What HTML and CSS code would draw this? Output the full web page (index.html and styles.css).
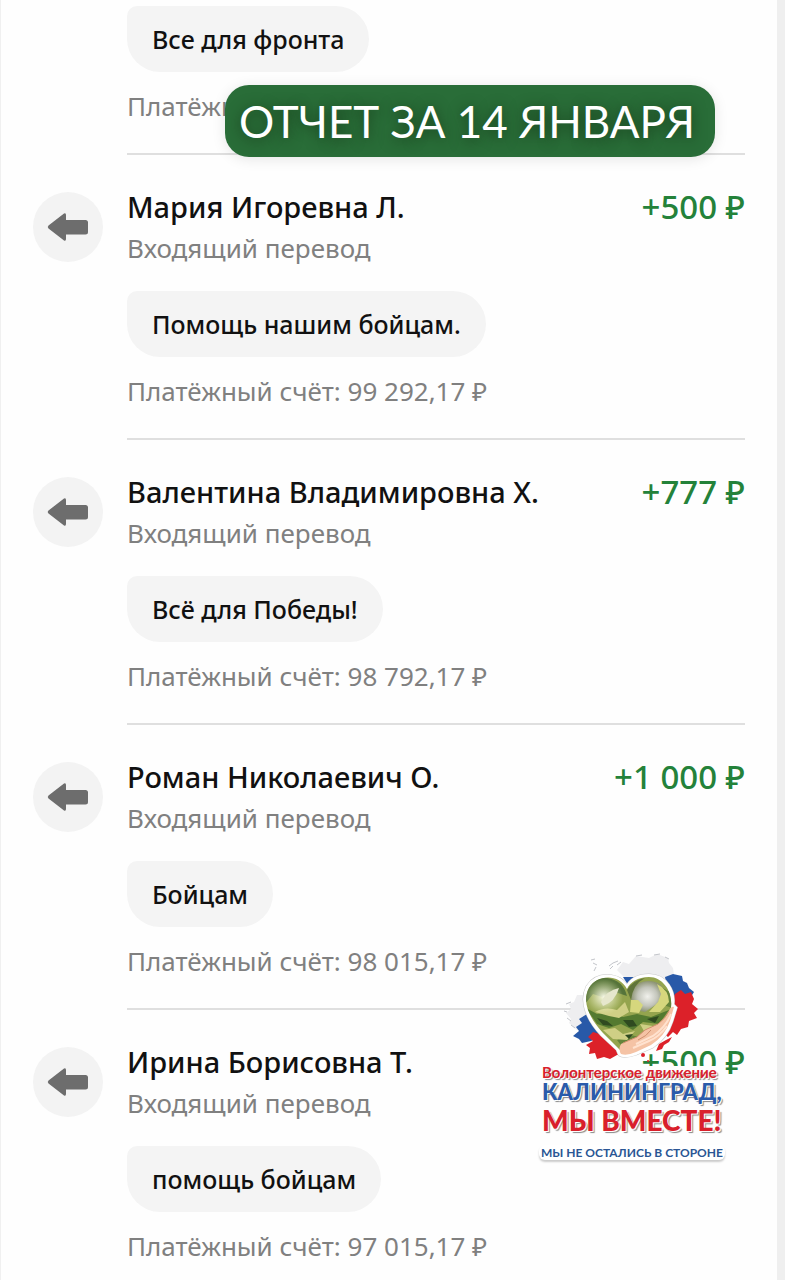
FILE: index.html
```html
<!DOCTYPE html>
<html lang="ru">
<head>
    <meta charset="UTF-8">
    <meta name="viewport" content="width=device-width, initial-scale=1.0">
    <title>Отчет за 14 января</title>
    <link rel="stylesheet" href="styles.css">
</head>
<body>
    <svg class="sprite" width="0" height="0">
        <symbol id="arrow" viewBox="0 0 42 30">
            <path d="M17 1.5 Q19 .5 19 3 V8 H38.500 Q41 8 41 10.500 V20 Q41 22.500 38.500 22.500 H19 V27 Q19 29.500 17 28.500 L1.500 16.500 Q0 15 1.500 13.500 Z" fill="#6d6d6d"/>
        </symbol>
    </svg>

    <main class="history">
        <h1 class="banner">ОТЧЕТ ЗА 14 ЯНВАРЯ</h1>

        <section class="transfer cut">
            <div class="details">
                <p class="message">Все для фронта</p>
                <p class="account">Платёжн</p>
            </div>
        </section>

        <section class="transfer">
            <div class="icon"><svg><use href="#arrow"/></svg></div>
            <div class="details">
                <div class="title">
                    <h2>Мария Игоревна Л.</h2>
                    <span class="amount">+500 ₽</span>
                </div>
                <p class="type">Входящий перевод</p>
                <p class="message">Помощь нашим бойцам.</p>
                <p class="account">Платёжный счёт: 99 292,17 ₽</p>
            </div>
        </section>

        <section class="transfer">
            <div class="icon"><svg><use href="#arrow"/></svg></div>
            <div class="details">
                <div class="title">
                    <h2>Валентина Владимировна Х.</h2>
                    <span class="amount">+777 ₽</span>
                </div>
                <p class="type">Входящий перевод</p>
                <p class="message">Всё для Победы!</p>
                <p class="account">Платёжный счёт: 98 792,17 ₽</p>
            </div>
        </section>

        <section class="transfer">
            <div class="icon"><svg><use href="#arrow"/></svg></div>
            <div class="details">
                <div class="title">
                    <h2>Роман Николаевич О.</h2>
                    <span class="amount">+1 000 ₽</span>
                </div>
                <p class="type">Входящий перевод</p>
                <p class="message">Бойцам</p>
                <p class="account">Платёжный счёт: 98 015,17 ₽</p>
            </div>
        </section>

        <section class="transfer last">
            <div class="icon"><svg><use href="#arrow"/></svg></div>
            <div class="details">
                <div class="title">
                    <h2>Ирина Борисовна Т.</h2>
                    <span class="amount">+500 ₽</span>
                </div>
                <p class="type">Входящий перевод</p>
                <p class="message">помощь бойцам</p>
                <p class="account">Платёжный счёт: 97 015,17 ₽</p>
            </div>

            <!-- volunteer movement stamp -->
            <div class="stamp">
                <svg class="emblem" viewBox="0 0 190 116">
                    <defs>
                        <clipPath id="heart">
                            <path d="M88 39 C80 24 59 24 50 38 C42 53 52 70 64 83 L84 103 L116 90 L131 62 C136 46 126 27 110 27 C99 27 91 32 88 39 Z"/>
                        </clipPath>
                        <radialGradient id="shine">
                            <stop offset="0" stop-color="#fffff0" stop-opacity=".95"/>
                            <stop offset=".4" stop-color="#f4f5d8" stop-opacity=".6"/>
                            <stop offset="1" stop-color="#e9efb0" stop-opacity="0"/>
                        </radialGradient>
                        <radialGradient id="silver">
                            <stop offset="0" stop-color="#f1f1ec"/>
                            <stop offset=".6" stop-color="#c3c5bb"/>
                            <stop offset="1" stop-color="#8d9474"/>
                        </radialGradient>
                    </defs>
                    <!-- flag brush strokes -->
                    <g fill="#eeeef0">
                        <path d="M78 20 L84 12 L90 14 L97 6 L110 8 L118 4 L129 8 L130 13 L134 18 L135 25 L132 32 L110 28 L90 32 Z"/>
                        <path d="M47 45 L38 45 L35 52 L30 54 L32 59 L27 63 L32 69 L30 73 L38 80 L54 76 Z"/>
                    </g>
                    <g fill="none" stroke="#c3c5ca" stroke-width="1">
                        <path d="M52 10 l4 -1 M54 13 l4 2 M57 17 l-2 4 M70 16 l4 -3 l5 -2 M71 19 l3 -3 M78 15 l4 -3 M97 6 l6 -1 M115 5 l6 -1 M126 7 l4 2 M27 54 l5 -2 M25 61 l3 1 M28 68 l4 3 M32 75 l4 3"/>
                    </g>
                    <g fill="#2859a8">
                        <path d="M126 27 L134 24 L143 26 L144 31 L148 33 L150 38 L155 42 L150 50 L130 47 Z"/>
                        <path d="M48 64 L40 69 L43 73 L37 77 L40 81 L34 86 L40 89 L43 93 L52 91 L68 84 Z"/>
                        <path d="M84 27 L95 27 L89 35 Z"/>
                    </g>
                    <g fill="#dc2129">
                        <path d="M132 52 L136 44 L142 40 L146 44 L152 42 L155 49 L153 54 L159 59 L155 63 L158 68 L150 71 L149 77 L142 79 L138 85 L134 82 L129 87 L123 82 Z"/>
                        <path d="M54 82 L49 87 L54 91 L47 95 L51 98 L50 104 L56 103 L58 109 L65 107 L71 109 L78 105 L84 105 L77 89 Z"/>
                        <path d="M127 90 L133 87 L130 92 L125 95 L123 99 L117 101 L120 94 Z"/>
                        <circle cx="104" cy="105" r="2"/>
                        <circle cx="109" cy="111" r="1"/>
                    </g>
                    <!-- heart -->
                    <path d="M88 38 C80 23 58 23 49 37 C41 53 51 71 63 84 L79 99 L81 104 Q85 107 97 103 L113 96 Q127 87 132 71 L136 58 L133 55 C135 42 127 26 110 26 Q94 26 88 38 Z" fill="#fff" stroke="#c9c9c9" stroke-width="5"/>
                    <path d="M88 38 C80 23 58 23 49 37 C41 53 51 71 63 84 L79 99 L81 104 Q85 107 97 103 L113 96 Q127 87 132 71 L136 58 L133 55 C135 42 127 26 110 26 Q94 26 88 38 Z" fill="#fff" stroke="#fff" stroke-width="4"/>
                    <g clip-path="url(#heart)">
                        <rect x="40" y="22" width="100" height="84" fill="#94a44e"/>
                        <path d="M44 40 Q56 25 68 28 Q84 30 88 46 L76 42 L66 48 L54 44 L46 54 Z" fill="#56743a"/>
                        <path d="M47 58 L58 64 L72 62 L84 67 L98 64 L112 67 L130 60 L120 74 L104 72 L94 80 L82 74 L70 78 L58 74 Z" fill="#547a30"/>
                        <path d="M78 90 L88 84 L100 87 L94 95 L84 98 Z M120 36 L131 42 L133 58 L122 54 Z" fill="#64843a"/>
                        <path d="M56 62 Q66 56 78 60 L86 52 L90 62 L80 68 L70 66 Z M64 80 L76 78 L84 84 L96 81 L88 90 L74 89 Z M101 74 L114 76 L106 83 Z" fill="#cfcf85"/>
                        <path d="M58 68 L68 71 L74 76 L64 75 Z M84 70 L94 70 L98 76 L90 77 Z M108 69 L120 66 L116 73 Z M86 85 L94 84 L90 89 Z" fill="#2f4a20"/>
                        <ellipse cx="65" cy="47" rx="19" ry="18" fill="url(#shine)"/>
                        <path d="M62 52 Q68 40 80 38 Q76 52 64 56 Z" fill="#e6e7cd"/>
                        <path d="M92 50 Q92 32 109 31 Q124 31 125 43 L118 54 L106 62 L96 60 Z" fill="url(#silver)"/>
                        <path d="M88 40 Q94 30 106 28 Q94 34 92 50 Z" fill="#60743a"/>
                        <path d="M92 50 L99 50 L104 55 L100 63 L91 62 Z M118 34 Q130 40 130 52 L121 62 L110 62 L119 52 L122 44 Z" fill="#d6d77d"/>
                    </g>
                    <!-- hand -->
                    <path d="M135 57 Q132 56 130 61 Q127 68 119 74 L106 80 L98 87 Q89 90 82 94 Q79 99 82 104 Q88 106 97 102 L112 95 Q126 86 131 71 Z" fill="#f5c3a5"/>
                    <path d="M130 61 Q127 68 119 74 L106 80 L98 87 L84 93 M112 80 Q108 86 99 90" fill="none" stroke="#d0906e" stroke-width="1"/>
                    <path d="M132 64 Q127 77 114 86 L97 94 M128 76 Q120 87 110 91 L94 98" fill="none" stroke="#ffe2cf" stroke-width="2"/>
                </svg>
                <div class="stamp-text">
                    <p class="movement">Волонтерское движение</p>
                    <p class="city">КАЛИНИНГРАД,</p>
                    <p class="together">МЫ ВМЕСТЕ!</p>
                </div>
                <p class="slogan">МЫ НЕ ОСТАЛИСЬ В СТОРОНЕ</p>
            </div>
        </section>
    </main>
</body>
</html>
```

FILE: styles.css
```css
* {
    box-sizing: border-box;
}
body {
    margin: 0;
    font-family: "Noto Sans", sans-serif;
    background: #efefef;
    color: #111;
}
h1, h2, p {
    margin: 0;
    font-weight: 500;
}
.sprite {
    position: absolute;
}
.history {
    position: relative;
    min-height: 100vh;
    margin-right: 8px;
    padding: 0 32px;
    background: #fefefe;
    border-left: 1px solid #f0f0f0;
    overflow: hidden;
}
.banner {
    position: absolute;
    top: 85px;
    right: 62px;
    z-index: 1;
    padding: 0 20px 0 14px;
    border-radius: 24px;
    background: #296d38;
    box-shadow: 0 2px 14px rgba(0, 0, 0, 0.1);
    color: #fff;
    font-family: Lato, sans-serif;
    font-size: 44px;
    font-weight: 400;
    line-height: 72px;
    white-space: nowrap;
    text-shadow: 0 2px 14px rgba(20, 50, 20, 0.8);
}
.transfer {
    position: relative;
    display: flex;
    gap: 24px;
}
.cut {
    padding: 6px 0 0 94px;
}
.icon {
    display: flex;
    flex: none;
    align-items: center;
    justify-content: center;
    width: 70px;
    height: 70px;
    margin-top: 37px;
    border-radius: 50%;
    background: #f3f3f3;
}
.icon svg {
    width: 42px;
    height: 30px;
}
.details {
    flex: 1;
    border-bottom: 2px solid #dfdfdf;
}
.title {
    display: flex;
    justify-content: space-between;
    padding-top: 32px;
    line-height: 40px;
}
.title h2 {
    font-size: 29px;
}
.amount {
    color: #24823a;
    font-size: 33px;
    font-weight: 500;
}
.type,
.account {
    color: #808080;
    font-size: 26px;
    font-weight: 400;
}
.type {
    padding-top: 3px;
    line-height: 36px;
}
.message {
    width: fit-content;
    padding: 0 25px;
    border-radius: 10px 33px 33px 33px;
    background: #f4f4f4;
    font-size: 25px;
    line-height: 66px;
}
.type + .message {
    margin-top: 25px;
}
.account {
    padding: 16px 0 29px;
    line-height: 36px;
}
.last .details {
    border-bottom: none;
}
.stamp {
    position: absolute;
    top: -60px;
    right: 16px;
    width: 190px;
}
.emblem {
    display: block;
    width: 190px;
    height: 116px;
}
.stamp-text,
.slogan {
    font-family: Lato, sans-serif;
    white-space: nowrap;
}
.stamp-text {
    width: 182px;
    padding-left: 3px;
    background: #fefefe;
    color: #d9202b;
    text-shadow: 1px 1px 0 #fff, 2px 2px 1px #888;
}
.movement {
    font-size: 15px;
    font-weight: 700;
    line-height: 12px;
}
.city {
    color: #2a5baa;
    font-size: 22px;
    font-weight: 900;
    line-height: 28px;
}
.together {
    font-size: 28px;
    font-weight: 900;
    line-height: 28px;
}
.slogan {
    width: fit-content;
    margin-top: 11px;
    padding: 0 2px;
    border-radius: 6px;
    background: #fff;
    box-shadow: 0 2px 2px #ccc;
    color: #2a5694;
    font-size: 12px;
    font-weight: 700;
    line-height: 15px;
}
```
